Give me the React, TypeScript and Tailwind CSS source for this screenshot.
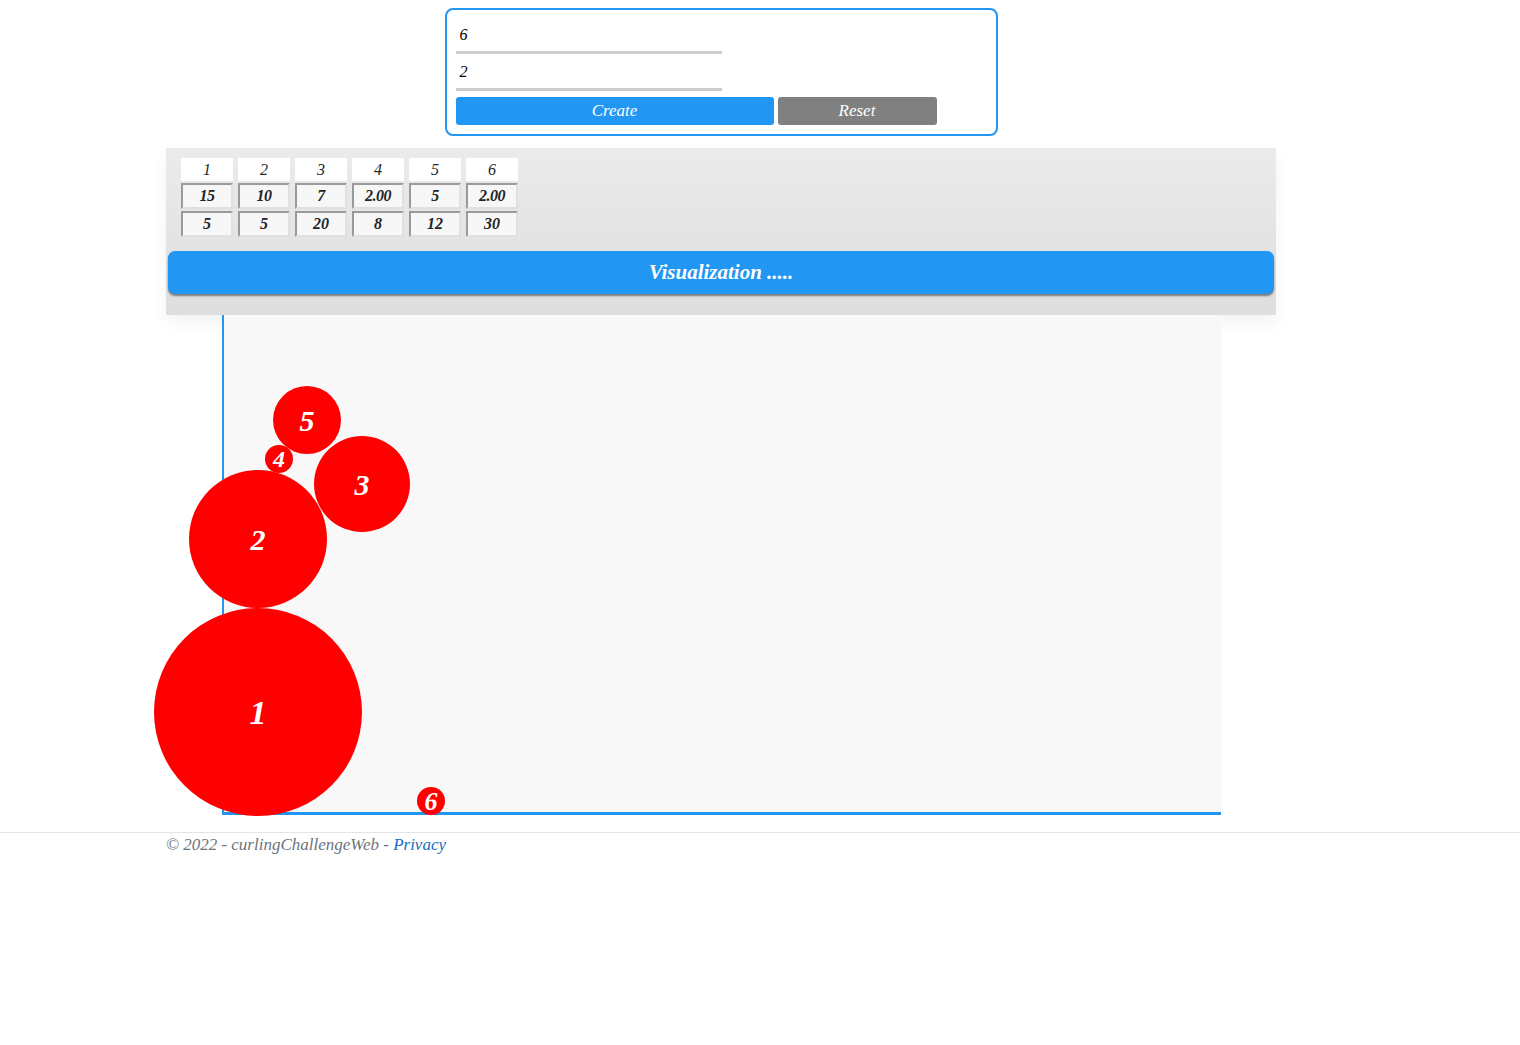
import React from "react";

interface Circle {
  id: number;
  x: number;
  y: number;
  r: number;
  size: string;
}

const headers = ["1", "2", "3", "4", "5", "6"];
const rowA = ["15", "10", "7", "2.00", "5", "2.00"];
const rowB = ["5", "5", "20", "8", "12", "30"];

// positions are relative to the drawing area (inside the left border)
const circles: Circle[] = [
  { id: 1, x: 34, y: 397, r: 104, size: "text-[34px]" },
  { id: 2, x: 34, y: 224, r: 69, size: "text-[30px]" },
  { id: 3, x: 138, y: 169, r: 48, size: "text-[30px]" },
  { id: 5, x: 83, y: 105, r: 34, size: "text-[30px]" },
  { id: 4, x: 55, y: 144, r: 14, size: "text-[24px]" },
  { id: 6, x: 207, y: 486, r: 14, size: "text-[26px]" },
];

const App: React.FC = () => {
  return (
    <div className="min-h-[1045px] bg-white font-['Liberation_Serif',serif] italic text-[#212529]">
      <div className="ml-[166px] w-[1110px] pt-[8px]">
        {/* form */}
        <div className="mx-auto w-[553px] rounded-[8px] border-2 border-[#2196f3] px-[9px] pt-[13px] pb-[9px]">
          <div className="w-[266px] border-b-[3px] border-[#cccccc] pl-[4px] pb-[4px] text-[16px] leading-[24px] text-black">
            6
          </div>
          <div className="mt-[6px] w-[266px] border-b-[3px] border-[#cccccc] pl-[4px] pb-[4px] text-[16px] leading-[24px] text-black">
            2
          </div>
          <div className="mt-[6px] flex gap-[4px]">
            <button className="h-[28px] w-[318px] rounded-[3px] bg-[#2196f3] text-[17px] italic text-white">
              Create
            </button>
            <button className="h-[28px] w-[159px] rounded-[3px] bg-[#808080] text-[17px] italic text-white">
              Reset
            </button>
          </div>
        </div>

        {/* table panel */}
        <div className="mt-[12px] h-[167px] bg-gradient-to-b from-[#ebebeb] to-[#dedede] shadow-[0_8px_16px_rgba(0,0,0,0.05)]">
          <div className="flex gap-[5px] pl-[15px] pt-[10px]">
            {headers.map((h, i) => (
              <div key={h} className="flex w-[52px] flex-col gap-[2px]">
                <div className="flex h-[23px] items-center justify-center bg-white text-[16px]">
                  {h}
                </div>
                <div className="flex h-[26px] items-center justify-center border-2 border-t-[#9a9a9a] border-l-[#9a9a9a] border-r-[#e0e0e0] border-b-[#e0e0e0] bg-[#f7f7f7] text-[16px] font-bold tracking-[-0.5px]">
                  {rowA[i]}
                </div>
                <div className="flex h-[26px] items-center justify-center border-2 border-t-[#9a9a9a] border-l-[#9a9a9a] border-r-[#e0e0e0] border-b-[#e0e0e0] bg-[#f7f7f7] text-[16px] font-bold">
                  {rowB[i]}
                </div>
              </div>
            ))}
          </div>
          <div className="mx-[2px] mt-[14px] flex h-[43px] items-center justify-center rounded-[7px] bg-[#2196f3] text-[21px] font-bold text-white shadow-[0_2px_2px_rgba(0,0,0,0.45)]">
            Visualization .....
          </div>
        </div>

        {/* drawing area */}
        <div className="relative ml-[56px] h-[500px] w-[999px] border-b-[3px] border-l-2 border-[#2196f3] bg-[#f8f8f8]">
          {circles.map((c) => (
            <div
              key={c.id}
              className={`absolute flex items-center justify-center rounded-full bg-[#ff0000] font-bold text-white ${c.size}`}
              style={{
                left: c.x - c.r,
                top: c.y - c.r,
                width: c.r * 2,
                height: c.r * 2,
              }}
            >
              {c.id}
            </div>
          ))}
        </div>
      </div>

      {/* footer */}
      <div className="mt-[17px] border-t border-[#e5e5e5]">
        <div className="ml-[166px] pt-[1px] text-[17px] leading-[22px] text-[#6c757d]">
          © 2022 - curlingChallengeWeb - <span className="text-[#1b6ec2]">Privacy</span>
        </div>
      </div>
    </div>
  );
};

export default App;
